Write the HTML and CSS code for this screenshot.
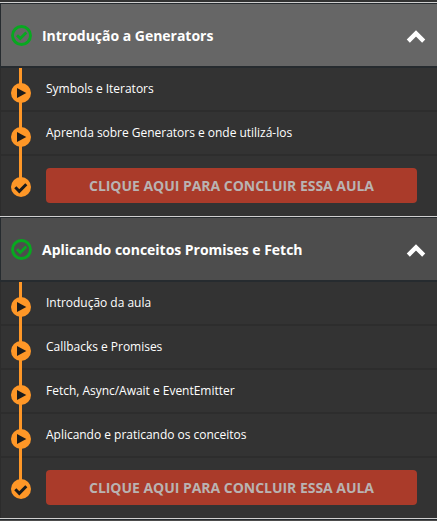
FILE: index.html
```html
<!DOCTYPE html>
<html lang="pt-BR">
<head>
<meta charset="utf-8">
<title>Aulas</title>
<link rel="stylesheet" href="styles.css">
</head>
<body>
<svg class="defs" width="0" height="0">
  <symbol id="done" viewBox="0 0 21 21"><circle cx="10.5" cy="10.5" r="9" fill="none" stroke="#08a820" stroke-width="2.9"/><path d="M6 10.3 9.3 13.6 15.3 7.6" fill="none" stroke="#08a820" stroke-width="2.8"/></symbol>
  <symbol id="up" viewBox="0 0 20 14"><path d="M2.3 11.1 10 3.4 17.7 11.1" fill="none" stroke="#fff" stroke-width="4.4"/></symbol>
  <symbol id="play" viewBox="0 0 20 20"><circle cx="10" cy="10" r="10" fill="#ff9727"/><path d="M6 5v10l9.3-5z" fill="#1c1c1c"/></symbol>
  <symbol id="check" viewBox="0 0 20 20"><circle cx="10" cy="10" r="10" fill="#ff9727"/><path d="M4.3 10.3 8.3 14.3 15.3 7.3" fill="none" stroke="#1c1c1c" stroke-width="3"/></symbol>
</svg>
<main class="course">
  <section class="module">
    <header class="module-head active"><svg class="done"><use href="#done"/></svg><h2 class="title">Introdução a Generators</h2><svg class="up"><use href="#up"/></svg></header>
    <ul class="lessons">
      <li class="lesson"><svg class="dot"><use href="#play"/></svg><span class="name">Symbols e Iterators</span></li>
      <li class="lesson"><svg class="dot"><use href="#play"/></svg><span class="name">Aprenda sobre Generators e onde utilizá-los</span></li>
      <li class="finish"><svg class="dot"><use href="#check"/></svg><button class="button">CLIQUE AQUI PARA CONCLUIR ESSA AULA</button></li>
    </ul>
  </section>
  <section class="module">
    <header class="module-head"><svg class="done"><use href="#done"/></svg><h2 class="title">Aplicando conceitos Promises e Fetch</h2><svg class="up"><use href="#up"/></svg></header>
    <ul class="lessons">
      <li class="lesson"><svg class="dot"><use href="#play"/></svg><span class="name">Introdução da aula</span></li>
      <li class="lesson"><svg class="dot"><use href="#play"/></svg><span class="name">Callbacks e Promises</span></li>
      <li class="lesson"><svg class="dot"><use href="#play"/></svg><span class="name">Fetch, Async/Await e EventEmitter</span></li>
      <li class="lesson"><svg class="dot"><use href="#play"/></svg><span class="name">Aplicando e praticando os conceitos</span></li>
      <li class="finish"><svg class="dot"><use href="#check"/></svg><button class="button">CLIQUE AQUI PARA CONCLUIR ESSA AULA</button></li>
    </ul>
  </section>
  <div class="next-module"></div>
</main>
</body>
</html>
```
FILE: styles.css
```css
* { box-sizing: border-box; }
body { margin: 0; background: #333; font-family: "Open Sans", sans-serif; color: #fff; }
svg { display: block; flex: none; }
.defs { position: absolute; }
.course { height: 521px; padding-top: 2px; overflow: hidden; }
.module { border-top: 1px solid #d0d0d0; }
.module-head {
  display: flex;
  align-items: center;
  height: 65px;
  padding: 0 11px 0 10px;
  background: #4d4d4d;
  border: solid #262b2f;
  border-width: 1px 0 2px 1px;
}
.module-head.active { background: #666; }
.done { width: 21px; height: 21px; }
.title { flex: 1; margin: 2px 0 0 10px; font-size: 14px; line-height: 20px; font-weight: 700; letter-spacing: -0.02px; white-space: nowrap; }
.up { width: 20px; height: 14px; margin-top: 4px; }
.lessons {
  margin: 0;
  padding: 0;
  list-style: none;
  border-left: 1px solid #2c2c2c;
}
.lesson, .finish {
  display: flex;
  align-items: flex-start;
  padding-left: 10px;
  background: linear-gradient(#ff9727, #ff9727) 18px 0 / 3px 30px no-repeat;
}
.lesson {
  height: 44px;
  background:
    linear-gradient(#ff9727, #ff9727) 18px 0 / 3px 100% no-repeat,
    linear-gradient(#2d2d2d, #2d2d2d) 0 100% / 100% 2px no-repeat;
}
.finish { height: 60px; }
.dot { width: 20px; height: 20px; margin-top: 15px; }
.finish .dot { margin-top: 21px; }
.name { margin: 11px 0 0 15px; font-size: 12px; line-height: 20px; letter-spacing: -0.02px; white-space: nowrap; }
.button {
  width: 371px;
  height: 35px;
  margin: 12px 0 0 15px;
  padding: 0;
  border: 0;
  border-radius: 4px;
  background: #aa3b2a;
  color: #b9b3b2;
  font: 700 14px/35px "Open Sans", sans-serif;
  letter-spacing: -0.03px;
}
.next-module { height: 4px; border-top: 1px solid #d0d0d0; background: linear-gradient(#262b2f 1px, #4d4d4d 1px); }
```
